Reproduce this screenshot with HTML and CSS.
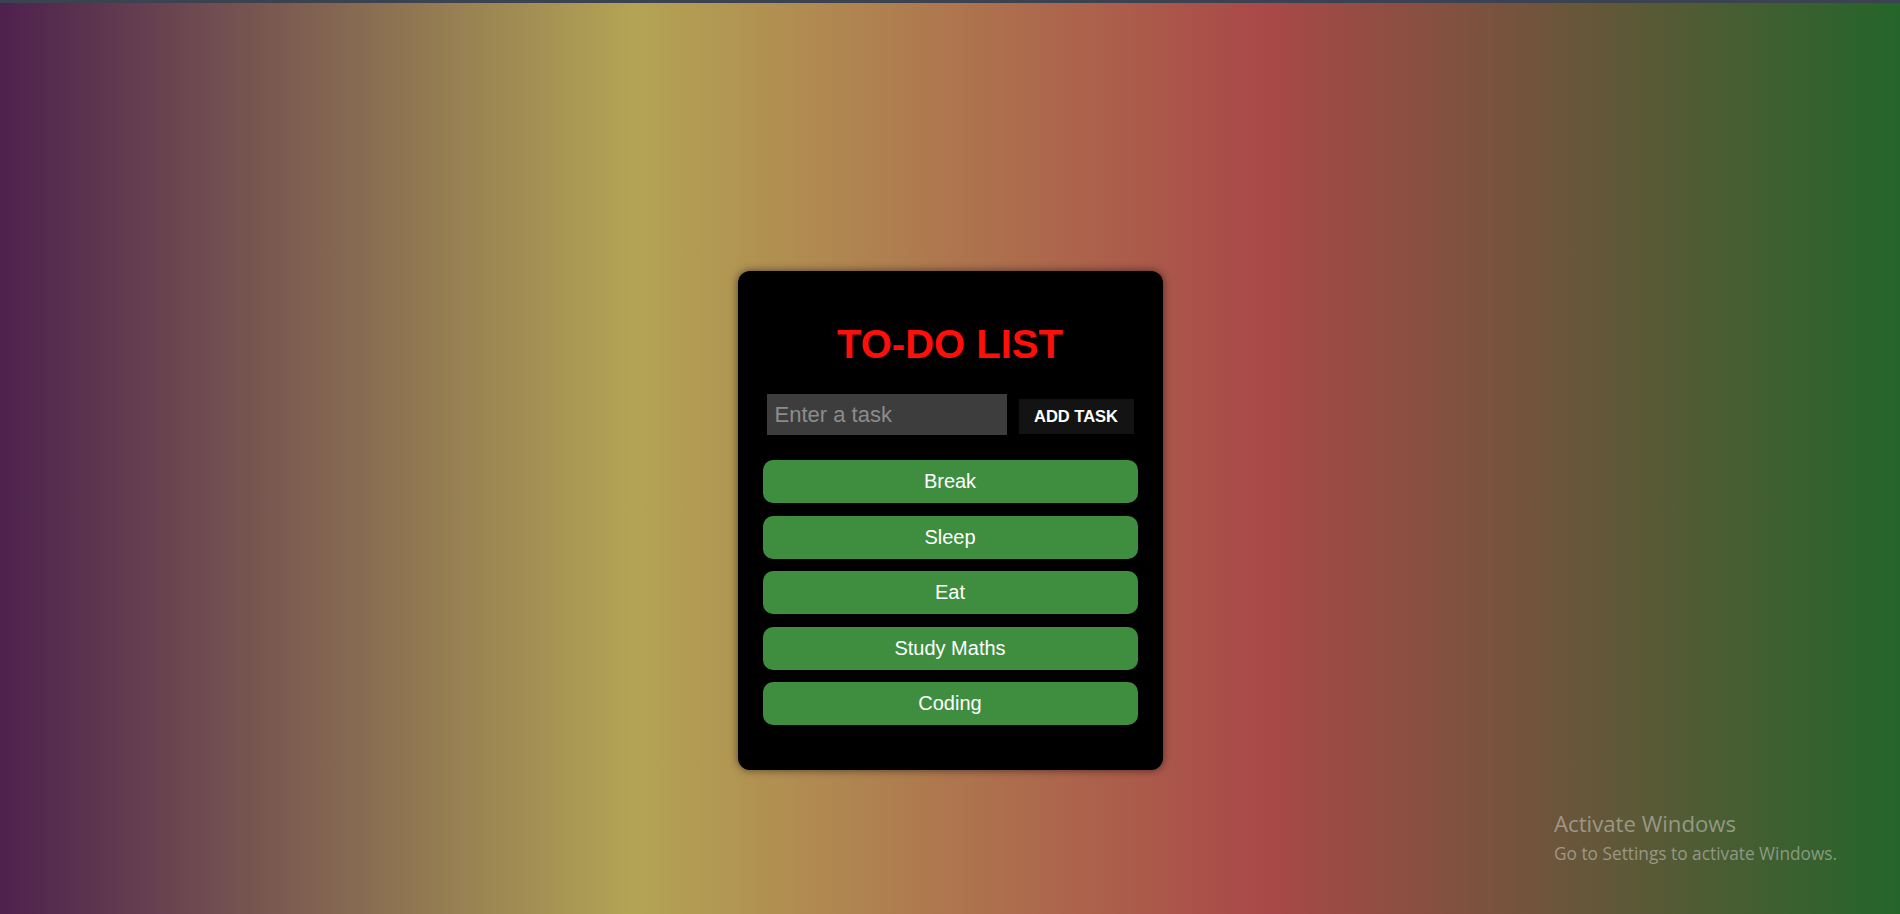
FILE: index.html
```html
<!DOCTYPE html>
<html lang="en">
<head>
<meta charset="utf-8">
<title>To-Do List</title>
<link rel="stylesheet" href="styles.css">
</head>
<body>
<div class="topbar"></div>
<main class="page">
  <section class="card">
    <h1 class="title">TO-DO LIST</h1>
    <div class="entry">
      <input class="task-input" type="text" placeholder="Enter a task">
      <button class="add-btn" type="button">ADD TASK</button>
    </div>
    <ul class="tasks">
      <li class="task">Break</li>
      <li class="task">Sleep</li>
      <li class="task">Eat</li>
      <li class="task">Study Maths</li>
      <li class="task">Coding</li>
    </ul>
  </section>
</main>
<div class="activate">
  <div class="activate-title">Activate Windows</div>
  <div class="activate-sub">Go to Settings to activate Windows.</div>
</div>
</body>
</html>
```
FILE: styles.css
```css
html, body {
  margin: 0;
  padding: 0;
}
body {
  width: 1900px;
  height: 914px;
  overflow: hidden;
  position: relative;
  font-family: "Liberation Sans", Arial, sans-serif;
  background: linear-gradient(to right, #4e214e 0%, #b3a454 33.3%, #a94848 66.7%, #24652a 100%);
}
.topbar {
  height: 3px;
  background: #3c4350;
}
.page {
  padding-top: 268px;
}
.card {
  width: 425px;
  box-sizing: border-box;
  margin: 0 auto;
  padding: 50px 25px 45px;
  background: #000;
  border-radius: 12px;
  box-shadow: 0 0 8px rgba(0, 0, 0, 0.55);
}
.title {
  margin: 0 0 27px;
  text-align: center;
  color: #ff0f0a;
  font-size: 40px;
  font-weight: bold;
  line-height: 46px;
}
.entry {
  display: flex;
  justify-content: center;
  align-items: center;
  gap: 12px;
  margin-bottom: 25px;
}
.task-input {
  width: 240px;
  height: 41px;
  box-sizing: border-box;
  border: none;
  outline: none;
  padding: 0 8px;
  background: #3d3d3d;
  color: #fff;
  font-family: "Liberation Sans", Arial, sans-serif;
  font-size: 22px;
}
.task-input::placeholder {
  color: #8c8c8c;
}
.add-btn {
  width: 115px;
  height: 35px;
  margin-top: 4px;
  border: none;
  padding: 0;
  background: #131313;
  color: #fff;
  font-family: "Liberation Sans", Arial, sans-serif;
  font-size: 16.5px;
  font-weight: bold;
}
.tasks {
  list-style: none;
  margin: 0;
  padding: 0;
  display: flex;
  flex-direction: column;
  gap: 12.5px;
}
.task {
  height: 43px;
  display: flex;
  align-items: center;
  justify-content: center;
  background: #3f8e3f;
  color: #fff;
  border-radius: 10px;
  font-size: 20px;
}
.activate {
  position: absolute;
  left: 1554px;
  top: 808px;
  color: rgba(215, 215, 215, 0.5);
  font-family: "Open Sans", "Noto Sans", sans-serif;
}
.activate-title {
  font-size: 22.2px;
  line-height: 31px;
}
.activate-sub {
  font-size: 17.3px;
  line-height: 30px;
}
```
